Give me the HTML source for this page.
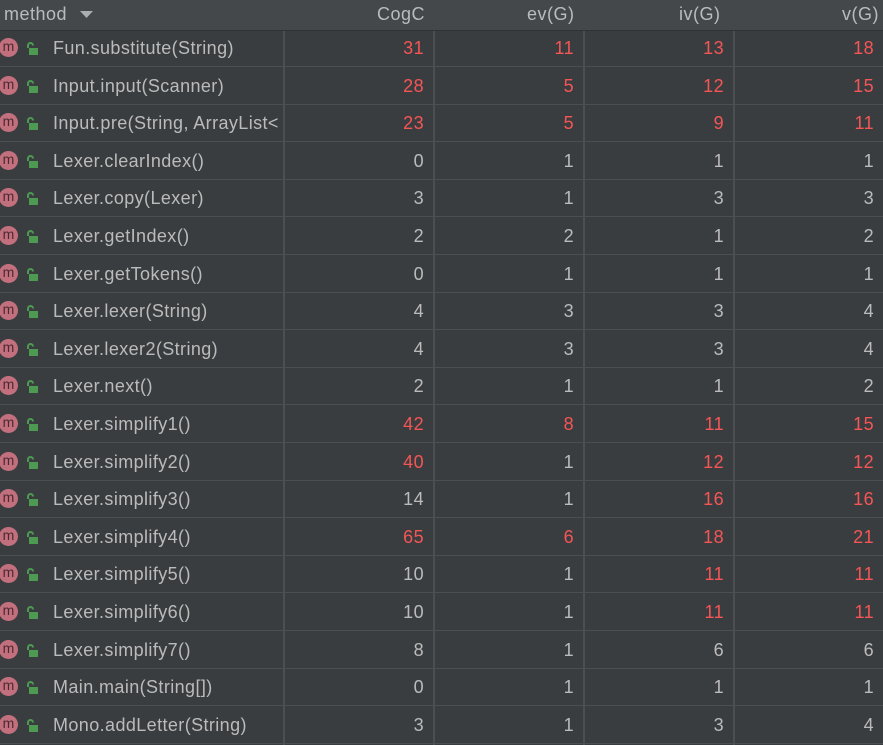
<!DOCTYPE html>
<html><head><meta charset="utf-8"><style>
html,body{margin:0;padding:0;width:883px;height:745px;overflow:hidden;background:#3a3d40;font-family:"Liberation Sans",sans-serif;}
.hdr{position:absolute;left:0;top:0;width:883px;height:30px;background:#45484a;border-bottom:1px solid #323232;color:#b8bcbf;font-size:18px;letter-spacing:0.5px;}
.hdr span{position:absolute;top:4px;}
.row{position:absolute;left:0;width:883px;height:37px;border-bottom:1px solid #4c4f52;color:#bbbbbb;font-size:18px;letter-spacing:0.4px;}
.vl{position:absolute;top:31px;bottom:0;width:2px;background:#4c4f52;}
.c{position:absolute;top:9px;text-align:right;width:100px;}
.r{color:#f55555;}
.ic{position:absolute;left:-1px;top:9px;width:19px;height:19px;border-radius:50%;background:#c2707e;color:#4a2a30;font-size:14px;line-height:17px;text-align:center;letter-spacing:0;}
.lk{position:absolute;left:25px;top:13px;}
.nm{position:absolute;left:53px;top:9px;white-space:nowrap;overflow:hidden;width:233px;}
</style></head><body>
<div class="hdr"><span style="left:4px">method</span>
<svg style="position:absolute;left:80px;top:11px" width="14" height="8"><path d="M0 0H13L6.5 7Z" fill="#aaaeb1"/></svg>
<span style="left:377px">CogC</span><span style="left:527px">ev(G)</span><span style="left:679px">iv(G)</span><span style="left:842px">v(G)</span></div>
<div class="vl" style="left:283px"></div><div class="vl" style="left:433px"></div><div class="vl" style="left:583px"></div><div class="vl" style="left:733px"></div>
<div id="rows"></div>
<script>
var d=[["Fun.substitute(String)",31,11,13,18,1],["Input.input(Scanner)",28,5,12,15,1],["Input.pre(String, ArrayList<",23,5,9,11,1],["Lexer.clearIndex()",0,1,1,1],["Lexer.copy(Lexer)",3,1,3,3],["Lexer.getIndex()",2,2,1,2],["Lexer.getTokens()",0,1,1,1],["Lexer.lexer(String)",4,3,3,4],["Lexer.lexer2(String)",4,3,3,4],["Lexer.next()",2,1,1,2],["Lexer.simplify1()",42,8,11,15,1],["Lexer.simplify2()",40,1,12,12,2],["Lexer.simplify3()",14,1,16,16,3],["Lexer.simplify4()",65,6,18,21,1],["Lexer.simplify5()",10,1,11,11,3],["Lexer.simplify6()",10,1,11,11,3],["Lexer.simplify7()",8,1,6,6],["Main.main(String[])",0,1,1,1],["Mono.addLetter(String)",3,1,3,4]];
var h="";
for(var i=0;i<d.length;i++){var r=d[i],t=Math.round(29+i*37.6),m=r[5]||0;
var red=[0,0,0,0];
if(m==1)red=[1,1,1,1];if(m==2){red=[1,0,1,1];}if(m==3){red=[0,0,1,1];}
h+='<div class="row" style="top:'+t+'px;height:37px"><div class="ic">m</div>'+
'<svg class="lk" width="14" height="14"><path d="M3 6V3.5a2.5 2.5 0 0 1 5 0" fill="none" stroke="#4e9a52" stroke-width="2"/><rect x="4" y="6" width="9" height="7" fill="#4e9a52"/></svg>'+
'<div class="nm">'+r[0].replace("<","&lt;")+'</div>';
var xs=[324,474,624,774];
for(var j=0;j<4;j++)h+='<div class="c'+(red[j]?' r':'')+'" style="left:'+xs[j]+'px">'+r[j+1]+'</div>';
h+='</div>';}
document.getElementById("rows").innerHTML=h;
</script>
</body></html>
